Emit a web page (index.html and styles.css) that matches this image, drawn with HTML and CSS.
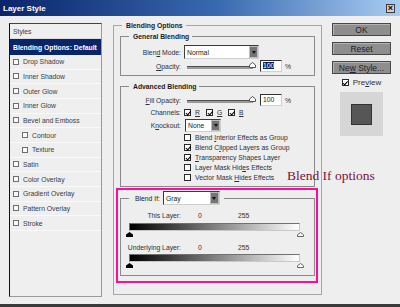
FILE: index.html
```html
<!DOCTYPE html>
<html lang="en">
<head>
  <meta charset="utf-8">
  <title>Layer Style</title>
  <link rel="stylesheet" href="styles.css">
</head>
<body>
  <div class="window">
    <div class="titlebar">
      <span class="title">Layer Style</span>
      <span class="close">&#215;</span>
    </div>

    <div class="content">
      <ul class="styles">
        <li class="head">Styles</li>
        <li class="selected">Blending Options: Default</li>
        <li><span class="box"></span>Drop Shadow</li>
        <li><span class="box"></span>Inner Shadow</li>
        <li><span class="box"></span>Outer Glow</li>
        <li><span class="box"></span>Inner Glow</li>
        <li><span class="box"></span>Bevel and Emboss</li>
        <li class="sub"><span class="box"></span>Contour</li>
        <li class="sub"><span class="box"></span>Texture</li>
        <li><span class="box"></span>Satin</li>
        <li><span class="box"></span>Color Overlay</li>
        <li><span class="box"></span>Gradient Overlay</li>
        <li><span class="box"></span>Pattern Overlay</li>
        <li><span class="box"></span>Stroke</li>
      </ul>

      <fieldset class="group outer">
        <legend>Blending Options</legend>

        <fieldset class="group general">
          <legend>General Blending</legend>
          <div class="row row-mode">
            <label>Blen<u>d</u> Mode:</label>
            <div class="select mode"><span>Normal</span><i class="arrow"></i></div>
          </div>
          <div class="row row-opacity">
            <label><u>O</u>pacity:</label>
            <div class="slider">
              <svg class="thumb" width="7" height="6" viewBox="0 0 7 6"><path d="M3.5 0.5 L6.5 3 L6.5 5.5 L0.5 5.5 L0.5 3 Z" fill="#fff" stroke="#555"/></svg>
            </div>
            <div class="num"><span class="sel">100</span></div>
            <span class="pct">%</span>
          </div>
        </fieldset>

        <fieldset class="group advanced">
          <legend>Advanced Blending</legend>
          <div class="row row-fill">
            <label><u>F</u>ill Opacity:</label>
            <div class="slider">
              <svg class="thumb" width="7" height="6" viewBox="0 0 7 6"><path d="M3.5 0.5 L6.5 3 L6.5 5.5 L0.5 5.5 L0.5 3 Z" fill="#fff" stroke="#555"/></svg>
            </div>
            <div class="num"><span>100</span></div>
            <span class="pct">%</span>
          </div>
          <div class="row row-channels">
            <label>Channels:</label>
            <span class="channel"><span class="check on"></span><u>R</u></span>
            <span class="channel"><span class="check on"></span><u>G</u></span>
            <span class="channel"><span class="check on"></span><u>B</u></span>
          </div>
          <div class="row row-knockout">
            <label>K<u>n</u>ockout:</label>
            <div class="select knock"><span>None</span><i class="arrow"></i></div>
          </div>
          <ul class="checks">
            <li><span class="check"></span><span>Blend <u>I</u>nterior Effects as Group</span></li>
            <li><span class="check on"></span><span>Blend C<u>l</u>ipped Layers as Group</span></li>
            <li><span class="check on"></span><span><u>T</u>ransparency Shapes Layer</span></li>
            <li><span class="check"></span><span>Layer Mask Hid<u>e</u>s Effects</span></li>
            <li><span class="check"></span><span>Vector Mask <u>H</u>ides Effects</span></li>
          </ul>
        </fieldset>

        <div class="highlight">
          <fieldset class="group blendif">
            <legend>
              <span class="legend-label">Blend If:</span>
              <span class="select gray"><span>Gray</span><i class="arrow"></i></span>
            </legend>
            <div class="row layer-row first">
              <label>This Layer:</label>
              <span class="v0">0</span>
              <span class="v255">255</span>
            </div>
            <div class="ramp"></div>
            <div class="thumbs">
              <svg width="7" height="5" viewBox="0 0 7 5"><path d="M3.5 0 L7 2.5 L7 5 L0 5 L0 2.5 Z" fill="#000"/></svg>
              <svg width="7" height="5" viewBox="0 0 7 5"><path d="M3.5 0.5 L6.5 2.7 L6.5 4.5 L0.5 4.5 L0.5 2.7 Z" fill="#fff" stroke="#666"/></svg>
            </div>
            <div class="row layer-row">
              <label>Underlying Layer:</label>
              <span class="v0">0</span>
              <span class="v255">255</span>
            </div>
            <div class="ramp second"></div>
            <div class="thumbs">
              <svg width="7" height="5" viewBox="0 0 7 5"><path d="M3.5 0 L7 2.5 L7 5 L0 5 L0 2.5 Z" fill="#000"/></svg>
              <svg width="7" height="5" viewBox="0 0 7 5"><path d="M3.5 0.5 L6.5 2.7 L6.5 4.5 L0.5 4.5 L0.5 2.7 Z" fill="#fff" stroke="#666"/></svg>
            </div>
          </fieldset>
        </div>
      </fieldset>

      <div class="actions">
        <button class="btn">OK</button>
        <button class="btn">Reset</button>
        <button class="btn">Ne<u>w</u> Style...</button>
        <div class="preview-row"><span class="check on"></span><span>Pre<u>v</u>iew</span></div>
        <div class="swatch"><div class="swatch-inner"></div></div>
      </div>
    </div>

    <div class="note">Blend If options</div>
  </div>
</body>
</html>
```

FILE: styles.css
```css
* {
  box-sizing: border-box;
}

body {
  margin: 0;
  background-color: #eeeeee;
  color: #2e2e36;
  font-family: "Liberation Sans", Arial, sans-serif;
  font-size: 6.8px;
}

u {
  text-decoration-thickness: 0.5px;
}

.window {
  position: relative;
  width: 400px;
  height: 307px;
  display: flex;
  flex-direction: column;
  border-bottom: 3px solid #3a3a3a;
}

.titlebar {
  height: 16px;
  display: flex;
  align-items: center;
  justify-content: space-between;
  padding: 0 5px 0 3px;
  background: linear-gradient(to right, #0a246a, #3a6ab0 55%, #a9ccf2);
}

.title {
  color: #fff;
  font-weight: bold;
  font-size: 8px;
}

.close {
  width: 9px;
  height: 9px;
  background-color: #d4d0c8;
  border: 1px solid #3c3c3c;
  color: #000;
  font-size: 9px;
  line-height: 6px;
  text-align: center;
  font-weight: bold;
}

.content {
  flex: 1;
  display: flex;
  align-items: flex-start;
  padding: 4px 0 0 9px;
}

/* styles list */
.styles {
  list-style: none;
  margin: 3px 0 0 0;
  padding: 0;
  width: 93px;
  height: 274px;
  background-color: #efefef;
  border-top: 1px solid #444;
  border-left: 1px solid #111;
  border-right: 1px solid #9a9a9a;
  border-bottom: 1px solid #9a9a9a;
}

.styles li {
  height: 14.67px;
  display: flex;
  align-items: center;
  padding-left: 3px;
  border-bottom: 1px solid #fafafa;
  color: #3a3a44;
}

.styles li.head {
  height: 15px;
  border-bottom: 1px solid #dcdcdc;
}

.styles li.selected {
  height: 16px;
  background-color: #0a246a;
  color: #fff;
  font-weight: bold;
  border-bottom: none;
}

.styles li.sub {
  padding-left: 12px;
}

.box {
  width: 6px;
  height: 6px;
  margin-right: 4px;
  background-color: #fafafa;
  border: 1px solid #6e6e6e;
}

/* group boxes */
.group {
  margin: 0;
  padding: 0;
  border: 1px solid #8a8a8a;
}

.group legend {
  height: 11px;
  line-height: 11px;
  margin-left: 8px;
  padding: 0 3px 0 4px;
  font-weight: bold;
  color: #1c1c24;
}

.outer {
  width: 209px;
  margin-left: 11px;
  padding: 0 6px 11px 6px;
  border-color: #a6a6a6;
}

.outer > legend {
  margin-left: 2px;
}

.general {
  padding: 3px 0 3px 0;
}

.advanced {
  margin-top: 5px;
  padding: 2px 0 4px 0;
}

.row {
  display: flex;
  align-items: center;
}

.row label {
  width: 60px;
  text-align: right;
}

.row-mode {
  height: 14px;
}

.row-opacity,
.row-fill {
  height: 12px;
}

.row-opacity {
  margin-top: 1px;
}

.select {
  display: flex;
  align-items: center;
  height: 14px;
  background-color: #fff;
  border: 1px solid;
  border-color: #3a3a3a #cfcfcf #cfcfcf #3a3a3a;
  color: #222;
}

.select span {
  padding-left: 2px;
}

.select .arrow {
  margin-left: auto;
  width: 9px;
  height: 100%;
  background-color: #747474;
  border: 1px solid #bdbdbd;
  display: flex;
  align-items: center;
  justify-content: center;
}

.select .arrow::after {
  content: "";
  border-left: 2.5px solid transparent;
  border-right: 2.5px solid transparent;
  border-top: 3px solid #111;
}

.mode {
  width: 75px;
  margin-left: 3px;
}

.knock {
  width: 36px;
  height: 13px;
  margin-left: 4px;
}

.slider {
  position: relative;
  width: 66px;
  height: 12px;
  margin-left: 6px;
}

.slider::before {
  content: "";
  position: absolute;
  left: 0;
  right: 0;
  top: 6px;
  height: 2px;
  background-color: #9a9a9a;
  border-top: 1px solid #505050;
}

.thumb {
  position: absolute;
  right: -3px;
  top: 2px;
}

.num {
  width: 22px;
  height: 12px;
  margin-left: 7px;
  padding-left: 2px;
  background-color: #fff;
  border: 1px solid;
  border-color: #303030 #d0d0d0 #d0d0d0 #303030;
  line-height: 10px;
  color: #222;
}

.num .sel {
  background-color: #0a246a;
  color: #fff;
}

.pct {
  margin-left: 3px;
}

.row-channels {
  height: 12px;
}

.channel {
  width: 22px;
  display: flex;
  align-items: center;
}

.row-channels .channel:first-of-type {
  margin-left: 3px;
}

.check {
  position: relative;
  width: 7px;
  height: 7px;
  margin-right: 4px;
  flex-shrink: 0;
  background-color: #fff;
  border: 1px solid #2a2a2a;
}

.check.on::after {
  content: "";
  position: absolute;
  left: 1.5px;
  top: 0;
  width: 1.5px;
  height: 3.5px;
  border-right: 1px solid #000;
  border-bottom: 1px solid #000;
  transform: rotate(40deg);
}

.row-knockout {
  height: 13px;
  margin-top: 1px;
}

.checks {
  list-style: none;
  margin: 0 0 0 63px;
  padding: 0;
}

.checks li {
  height: 10px;
  display: flex;
  align-items: center;
}

/* blend if */
.highlight {
  margin: 1px -3px 0 -4px;
  padding: 1px 1px 5px 2px;
  border: 2px solid #ff0d96;
}

.blendif {
  padding: 5px 0 7px 0;
}

.blendif legend {
  height: 14px;
  display: flex;
  align-items: center;
  padding: 0 4px 0 6px;
  font-weight: normal;
}

.legend-label {
  margin-right: 3px;
}

.gray {
  width: 57px;
  height: 14px;
}

.layer-row {
  height: 10px;
  margin-top: 5px;
}

.layer-row.first {
  margin-top: 0;
}

.v0 {
  width: 40px;
  margin-left: 17px;
}

.ramp {
  width: 171px;
  height: 8px;
  margin: 3px 0 0 8px;
  background: linear-gradient(to right, #000, #fff);
  border: 1px solid;
  border-color: #707070 #c8c8c8 #c8c8c8 #707070;
}

.ramp.second {
  margin-top: 2px;
}

.thumbs {
  width: 178px;
  height: 6px;
  margin-left: 5px;
  display: flex;
  justify-content: space-between;
  align-items: flex-end;
}

/* right column */
.actions {
  width: 59px;
  margin: 3px 0 0 10px;
  display: flex;
  flex-direction: column;
  align-items: center;
}

.btn {
  width: 59px;
  height: 13px;
  margin-bottom: 6px;
  padding: 0;
  font-family: "Liberation Sans", Arial, sans-serif;
  font-size: 8.5px;
  color: #23232d;
  background-color: #8e8e8e;
  border: 1px solid #474747;
  box-shadow: inset 1px 1px 0 #b4b4b4;
}

.preview-row {
  display: flex;
  align-items: center;
  height: 8px;
  margin-top: -2px;
  font-size: 8px;
}

.swatch {
  width: 43px;
  height: 44px;
  margin-top: 6px;
  display: flex;
  align-items: center;
  justify-content: center;
  background-color: #d6d6d6;
}

.swatch-inner {
  width: 21px;
  height: 21px;
  background-color: #565656;
  border: 1px solid #333;
}

.note {
  position: absolute;
  left: 287px;
  top: 169px;
  font-family: "Liberation Serif", "Times New Roman", serif;
  font-size: 13.5px;
  line-height: 14px;
  color: #7a1040;
}
```
